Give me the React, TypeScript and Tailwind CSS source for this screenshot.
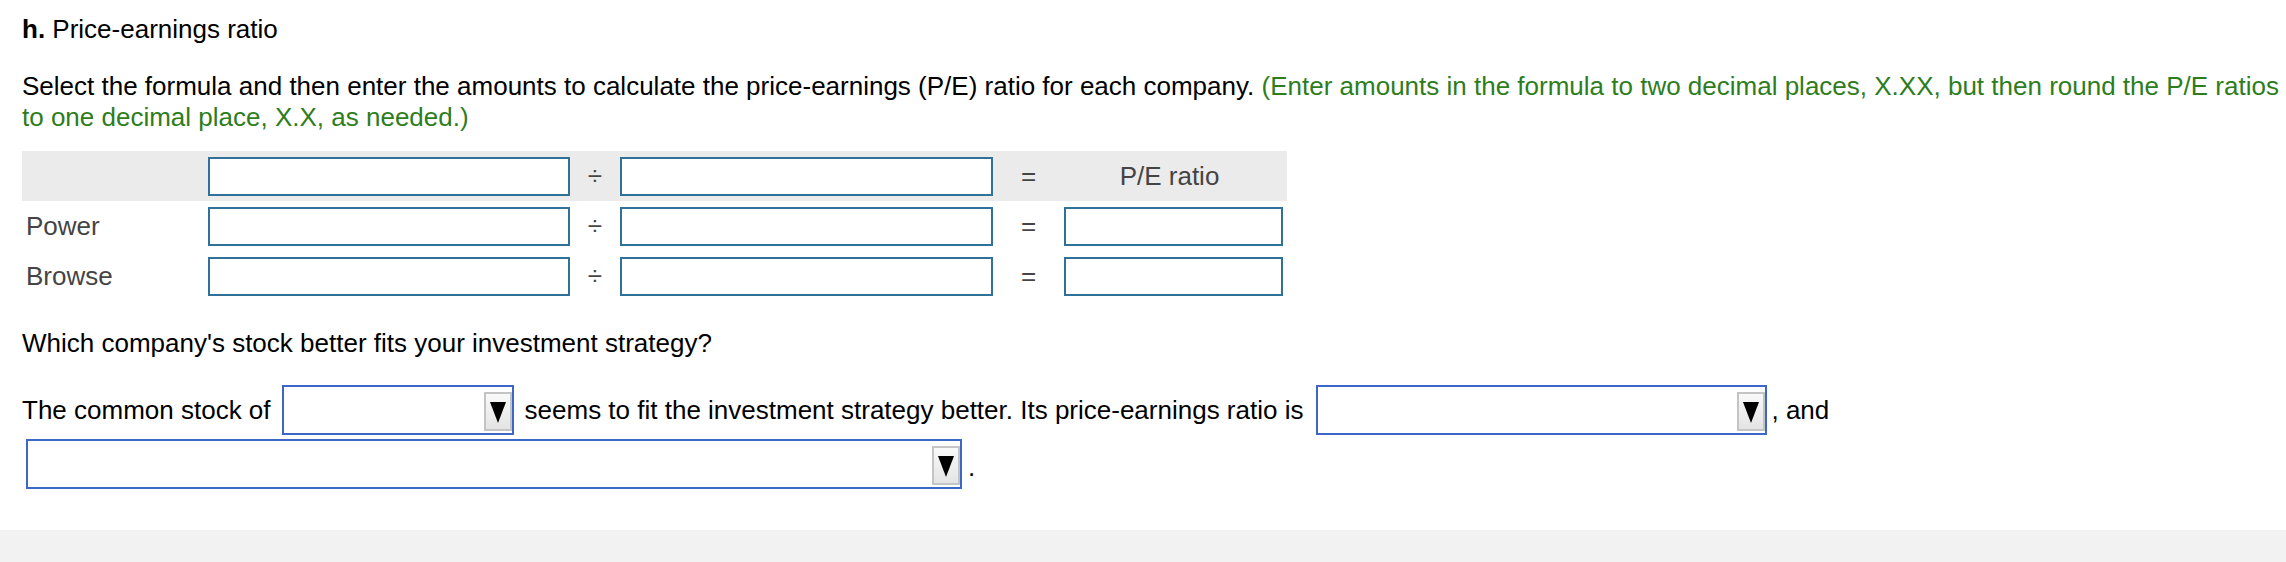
import React from "react";

function Box({ w }: { w: string }) {
  return <div className={`${w} h-[39px] border-2 border-[#30719a] bg-white`} />;
}

function Select({ className }: { className: string }) {
  return (
    <div className={`${className} relative border-2 border-[#3d67c6] bg-white`}>
      <div className="absolute right-0 top-[5px] w-[28px] h-[39px] border-2 border-[#c4c4c4] bg-gradient-to-b from-[#f9f9f9] to-[#e4e4e4] flex items-center justify-center">
        <svg width="18" height="24" viewBox="0 0 18 24">
          <polygon points="1,2 17,2 9,23" fill="#000" />
        </svg>
      </div>
    </div>
  );
}

function Row({ label, header }: { label?: string; header?: boolean }) {
  return (
    <div
      className={`grid grid-cols-[186px_362px_50px_373px_71px_219px_4px] h-[50px] items-center ${
        header ? "bg-[#ebebeb]" : ""
      }`}
    >
      <div className="pl-[4px] text-[#444]">{label}</div>
      <Box w="w-[362px]" />
      <div className="text-center text-[#444]">÷</div>
      <Box w="w-[373px]" />
      <div className="text-center text-[#444]">=</div>
      {header ? (
        <div className="text-center text-[#444] pr-[8px]">P/E ratio</div>
      ) : (
        <Box w="w-[219px]" />
      )}
      <div />
    </div>
  );
}

export default function App() {
  return (
    <div className="w-[2286px] h-[562px] bg-white flex flex-col font-['Liberation_Sans',Arial,sans-serif] text-[26px] leading-[31px] text-black">
      <div className="flex-1 pl-[22px] pt-[14px]">
        <div>
          <span className="font-bold">h.</span> Price-earnings ratio
        </div>
        <p className="mt-[26px]">
          Select the formula and then enter the amounts to calculate the price-earnings (P/E) ratio for each company.{" "}
          <span className="text-[#2e7d1c]">
            (Enter amounts in the formula to two decimal places, X.XX, but then round the P/E ratios to one decimal place, X.X, as needed.)
          </span>
        </p>
        <div className="mt-[18px] w-[1265px]">
          <Row header />
          <Row label="Power" />
          <Row label="Browse" />
        </div>
        <div className="mt-[27px]">Which company's stock better fits your investment strategy?</div>
        <div className="mt-[26px] flex items-center h-[50px]">
          <span>The common stock of</span>
          <Select className="ml-[11px] w-[232px] h-[50px]" />
          <span className="ml-[11px]">seems to fit the investment strategy better. Its price-earnings ratio is</span>
          <Select className="ml-[13px] w-[451px] h-[50px]" />
          <span className="ml-[4px]">, and</span>
        </div>
        <div className="mt-[4px] flex items-end h-[50px] pl-[4px]">
          <Select className="w-[936px] h-[50px]" />
          <span className="ml-[6px] leading-[31px] mb-[6px]">.</span>
        </div>
      </div>
      <div className="h-[32px] bg-[#f2f2f2]" />
    </div>
  );
}
